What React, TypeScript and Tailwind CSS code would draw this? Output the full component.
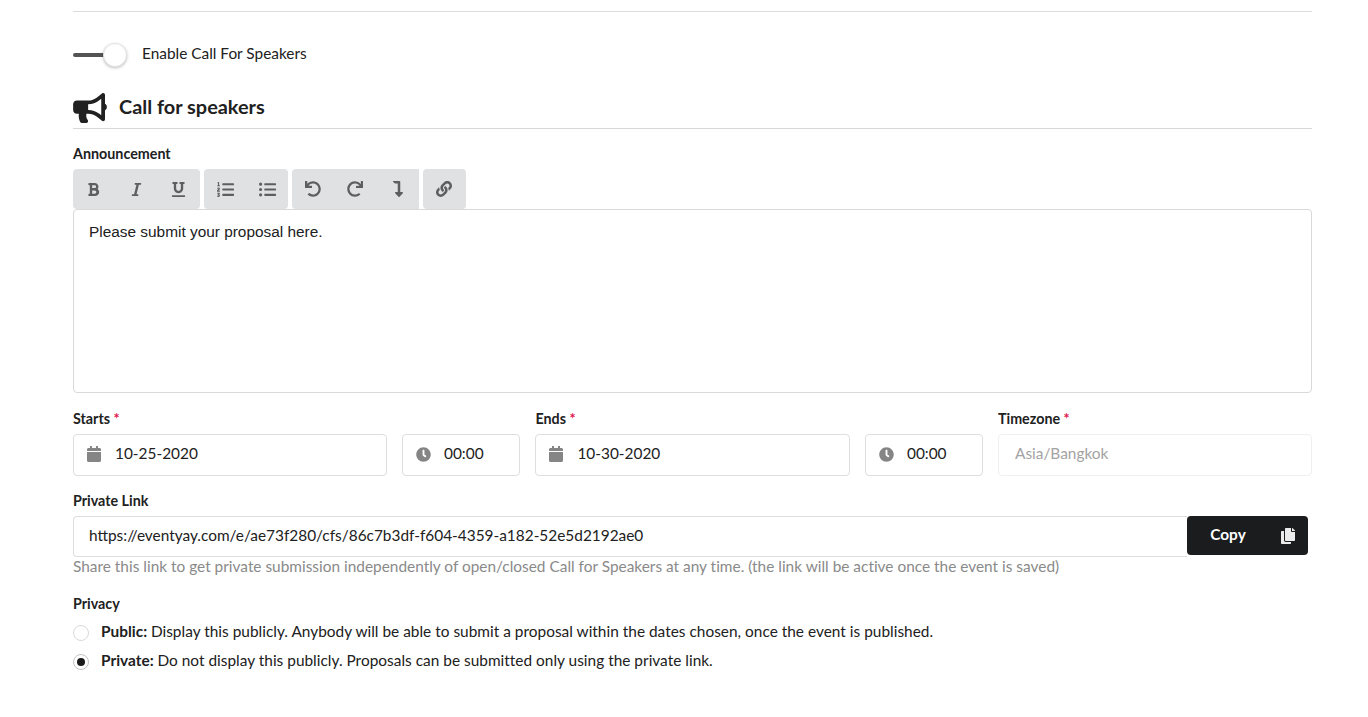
import React from "react";
import { FaBullhorn, FaBold, FaItalic, FaUnderline, FaListOl, FaListUl, FaUndo, FaRedo, FaLink, FaCalendar, FaClock, FaCopy, FaLevelDownAlt } from "react-icons/fa";

const lato = { fontFamily: "Lato, sans-serif" };

function Btn({ children }: { children: React.ReactNode }) {
  return <div className="w-[42.67px] h-[40px] flex items-center justify-center text-[#5c5e60]">{children}</div>;
}

function Group({ children, cls }: { children: React.ReactNode; cls: string }) {
  return <div className={`flex bg-[#e0e1e2] h-[40px] rounded-[4px] ${cls}`}>{children}</div>;
}

function Label({ text, req }: { text: string; req?: boolean }) {
  return (
    <div className="text-[14.3px] leading-[17px] font-bold text-[#212121] mb-[7px]">
      {text}
      {req && <span className="text-[#e0144c] font-bold"> *</span>}
    </div>
  );
}

function IconInput({ icon, value }: { icon: React.ReactNode; value: string }) {
  return (
    <div className="h-[42px] border border-[#dededf] rounded-[4px] flex items-center text-[15.4px] text-[#212121] pb-[2px]">
      <span className="w-[41px] pl-[13px] text-[#858585] flex items-center">{icon}</span>
      <span>{value}</span>
    </div>
  );
}

export default function App() {
  return (
    <div className="w-[1368px] h-[717px] bg-white overflow-hidden px-[73px] pr-[56px] text-[#212121] text-[15.4px]" style={lato}>
      <div className="h-[12px] border-b border-[#dcdcdd]" />

      <div className="flex items-center mt-[31px] h-[23px]">
        <div className="relative w-[54px] h-[23px] shrink-0">
          <div className="absolute left-0 top-[10px] w-[40px] h-[4px] rounded-[2px] bg-[#545454]" />
          <div className="absolute left-[30px] top-0 w-[24px] h-[24px] rounded-full bg-white border border-[#e3e3e3] shadow-[0_1px_3px_rgba(0,0,0,0.25)]" />
        </div>
        <span className="ml-[15px] leading-[22px] pb-[4px]">Enable Call For Speakers</span>
      </div>

      <div className="mt-[24px] flex items-center h-[39px] border-b border-[#d8d8d9] pb-[6px]">
        <FaBullhorn className="w-[34px] h-[30px] text-[#212121] shrink-0 mt-[3px]" />
        <span className="ml-[12px] text-[19.9px] font-bold leading-[26px]">Call for speakers</span>
      </div>

      <div className="mt-[16px]">
        <Label text="Announcement" />
        <div className="flex">
          <Group cls="w-[127px] mr-[4px]">
            <Btn><FaBold size={15} className="-ml-[2px]" /></Btn>
            <Btn><FaItalic size={15} /></Btn>
            <Btn><FaUnderline size={15} /></Btn>
          </Group>
          <Group cls="w-[84px] mr-[4px]">
            <Btn><FaListOl size={17} /></Btn>
            <Btn><FaListUl size={17} /></Btn>
          </Group>
          <Group cls="w-[127px] mr-[4px] rounded-r-none">
            <Btn><FaUndo size={16} /></Btn>
            <Btn><FaRedo size={16} /></Btn>
            <Btn><FaLevelDownAlt size={16} /></Btn>
          </Group>
          <Group cls="w-[43px]">
            <Btn><FaLink size={16} /></Btn>
          </Group>
        </div>
        <div className="h-[184px] border border-[#d9d9da] rounded-[4px] px-[15px] py-[12px] leading-[20px] text-[#212121]" style={{ fontFamily: '"Liberation Sans", sans-serif' }}>
          Please submit your proposal here.
        </div>
      </div>

      <div className="mt-[17px] grid grid-cols-[314px_118.4px_314.6px_118px_314px] gap-x-[15px]">
        <div>
          <Label text="Starts" req />
          <IconInput icon={<FaCalendar size={16} className="-ml-[1px]" />} value="10-25-2020" />
        </div>
        <div className="pt-[24px]">
          <IconInput icon={<FaClock size={15} />} value="00:00" />
        </div>
        <div>
          <Label text="Ends" req />
          <IconInput icon={<FaCalendar size={16} className="-ml-[1px]" />} value="10-30-2020" />
        </div>
        <div className="pt-[24px]">
          <IconInput icon={<FaClock size={15} />} value="00:00" />
        </div>
        <div>
          <Label text="Timezone" req />
          <div className="h-[42px] border border-[#f0f0f0] rounded-[4px] flex items-center pl-[16px] pb-[2px] text-[#a3a3a3]">Asia/Bangkok</div>
        </div>
      </div>

      <div className="mt-[16px]">
        <Label text="Private Link" />
        <div className="flex">
          <div className="flex-1 h-[41px] border border-[#dededf] border-r-0 rounded-l-[4px] flex items-center pl-[15px] pb-[1px]">
            https://eventyay.com/e/ae73f280/cfs/86c7b3df-f604-4359-a182-52e5d2192ae0
          </div>
          <div className="w-[121px] mr-[4px] h-[39px] bg-[#1b1c1d] rounded-[4px] text-white flex items-center">
            <span className="flex-1 text-center font-bold pl-[2px] pb-[1px]">Copy</span>
            <span className="w-[41px] flex justify-center"><FaCopy size={16} className="text-[#ececec]" /></span>
          </div>
        </div>
        <div className="leading-[20px] text-[#8a8a8a] -mt-[1px] tracking-[0.007px]">
          Share this link to get private submission independently of open/closed Call for Speakers at any time. (the link will be active once the event is saved)
        </div>
      </div>

      <div className="mt-[19px]">
        <div className="text-[14.3px] leading-[17px] font-bold">Privacy</div>
        <div className="flex items-center mt-[8px] h-[22px]">
          <span className="w-[16px] h-[16px] rounded-full border border-[#d9d9da] shrink-0 mt-[4px]" />
          <span className="ml-[12px] leading-[20px] tracking-[0.016px]"><b>Public: </b>Display this publicly. Anybody will be able to submit a proposal within the dates chosen, once the event is published.</span>
        </div>
        <div className="flex items-center mt-[7px] h-[22px]">
          <span className="w-[16px] h-[16px] rounded-full border border-[#c4c4c5] shrink-0 mt-[4px] flex items-center justify-center">
            <span className="w-[8px] h-[8px] rounded-full bg-[#1b1b1b]" />
          </span>
          <span className="ml-[12px] leading-[20px] tracking-[0.016px]"><b>Private: </b>Do not display this publicly. Proposals can be submitted only using the private link.</span>
        </div>
      </div>
    </div>
  );
}
